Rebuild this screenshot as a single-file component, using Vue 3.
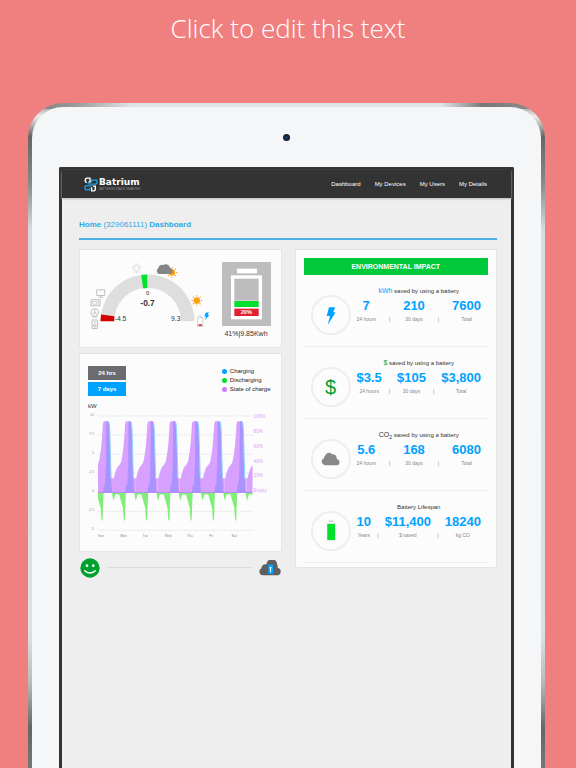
<!-- Battery dashboard shown inside a tablet frame -->
<template>
  <div class="page">
    <h1 class="headline">Click to edit this text</h1>

    <div class="tablet">
      <div class="bezel">
        <div class="camera"></div>
        <div class="screen">
          <!-- top bar -->
          <header class="navbar">
            <a class="brand" href="#">
              <svg class="brand-mark" viewBox="0 0 42 44" fill="none" stroke-width="4">
                <path d="M8 17 L4 13 V6 L8 3 H18 V15 H13" stroke="#fff" />
                <path d="M23 14 V9 H37 L39 12 V18 L35 21 H26" stroke="#1fa3e6" />
                <path d="M17 26 H5 L3 29 V35 L6 38 H17 V32" stroke="#1fa3e6" />
                <path d="M27 27 H34 V38 L31 41 H23 V30" stroke="#fff" />
                <path d="M13 15 V21 H21 M21 14 V30 M21 24 H28" stroke="#1fa3e6" stroke-width="3" />
              </svg>
              <span class="brand-text">
                <span class="brand-name">Batrium</span>
                <span class="brand-tag">BATTERIES MADE SMARTER</span>
              </span>
            </a>
            <nav class="nav-links">
              <a v-for="link in links" :key="link" href="#">{{ link }}</a>
            </nav>
          </header>

          <main class="content">
            <div class="breadcrumb"><b>Home</b> (329061111) <b>Dashboard</b></div>

            <div class="columns">
              <div class="left">
                <!-- power gauge and battery level -->
                <section class="card gauge-card">
                  <svg class="gauge" viewBox="36 45 384 225">
                    <path d="M77 231 A140 140 0 0 1 357 231 H317 A100 100 0 0 0 117 231 Z" fill="#dedede" />
                    <path d="M76 231 L78 211 L118 216 L117 231 Z" fill="#d40000" />
                    <path d="M198 93 L216 91 V132 L204 133 Z" fill="#00e02c" />
                    <g font-size="20" fill="#333">
                      <text x="217" y="152" text-anchor="middle" font-size="18">0</text>
                      <text x="217" y="186" text-anchor="middle" font-size="25" font-weight="bold">-0.7</text>
                      <text x="119" y="231">-4.5</text>
                      <text x="315" y="230" text-anchor="end">9.3</text>
                    </g>
                    <!-- bulb -->
                    <g fill="none" stroke="#c4c4c4" stroke-width="2">
                      <path d="M180 82 C180 77 176 76 176 71 A8 8 0 0 1 192 71 C192 76 188 77 188 82 Z M180 86 H188" />
                      <path d="M184 58 V61 M173 62 L175 64 M195 62 L193 64 M169 71 H173 M195 71 H199 M173 80 L175 78 M195 80 L193 78" />
                    </g>
                    <!-- sun behind cloud -->
                    <g stroke="#ff9f10" stroke-width="3">
                      <circle cx="290" cy="85" r="8" fill="#ff9f10" />
                      <path v-for="a in rays" :key="a" d="M290 73 V69" :transform="`rotate(${a} 290 85)`" />
                    </g>
                    <path d="M253 90 A8 9 0 0 1 249 73 A11 11 0 0 1 264 63 A13 13 0 0 1 284 71 A10 10 0 0 1 286 90 Z" fill="#858585" />
                    <!-- sun -->
                    <g stroke="#ff9f10" stroke-width="3">
                      <circle cx="364" cy="169" r="10" fill="#ff9f10" stroke="none" />
                      <path v-for="a in rays" :key="a" d="M364 157 V153" :transform="`rotate(${a} 364 169)`" />
                    </g>
                    <!-- appliances -->
                    <g fill="none" stroke="#c0c0c0" stroke-width="3">
                      <rect x="65" y="137" width="24" height="17" rx="2" />
                      <path d="M77 154 V158 M70 159 H84" />
                      <rect x="48" y="167" width="27" height="18" rx="1" />
                      <rect x="53" y="172" width="12" height="8" stroke-width="2" />
                      <path d="M70 170 V183" stroke-width="2" />
                      <circle cx="59" cy="205" r="11" />
                      <path d="M59 205 V197 M59 205 L53 210 M59 205 L66 210 M52 218 H66" />
                      <rect x="51" y="227" width="16" height="26" rx="2" />
                      <circle cx="59" cy="244" r="4" />
                      <circle cx="59" cy="233" r="1" />
                    </g>
                    <!-- low battery with bolt -->
                    <rect x="367" y="219" width="15" height="28" fill="#fff" stroke="#bbb" stroke-width="2" />
                    <path d="M371 215 H378" stroke="#bbb" stroke-width="2" />
                    <rect x="369" y="240" width="11" height="5" fill="#e0343f" />
                    <path d="M391 206 L400 204 L397 212 H402 L388 228 L392 217 H386 Z" fill="#00a2ff" />
                  </svg>

                  <div class="level">
                    <svg viewBox="0 0 147 192">
                      <rect width="147" height="192" fill="#bdbdbd" />
                      <rect x="45" y="20" width="60" height="14" fill="#fff" />
                      <rect x="27" y="40" width="93" height="132" fill="#fff" />
                      <rect x="37" y="50" width="73" height="66" fill="#bdbdbd" />
                      <rect x="37" y="117" width="73" height="18" fill="#00e02c" />
                      <rect x="37" y="140" width="73" height="22" fill="#e3202e" />
                      <text x="73" y="157" text-anchor="middle" font-size="17" font-weight="bold" fill="#fff">20%</text>
                    </svg>
                    <span>41%|9.85Kwh</span>
                  </div>
                </section>

                <!-- weekly chart -->
                <section class="card chart-card">
                  <div class="chart-top">
                    <div class="ranges">
                      <button
                        v-for="r in ranges"
                        :key="r"
                        type="button"
                        :class="{ active: r === range }"
                        @click="range = r"
                      >{{ r }}</button>
                    </div>
                    <ul class="legend">
                      <li class="charging">Charging</li>
                      <li class="discharging">Discharging</li>
                      <li class="soc">State of charge</li>
                    </ul>
                  </div>
                  <div class="unit">kW</div>
                  <svg class="chart" viewBox="36 180 564 399">
                    <defs>
                      <clipPath id="plot"><rect x="66" y="190" width="465" height="350" /></clipPath>
                    </defs>
                    <g stroke="#d4d4d4" stroke-width="2" stroke-dasharray="4 3">
                      <path v-for="t in ticks" :key="t.label" :d="`M66 ${t.y} H531`" />
                    </g>
                    <g clip-path="url(#plot)">
                      <g v-for="n in 8" :key="n" :transform="`translate(${(n - 1) * 67} 0)`">
                        <path :d="socPath" fill="#d8a0ff" />
                        <path :d="chargePath" fill="#a893ff" />
                        <path d="M97 214 C101 214 102 222 103 240 L107 385 L104 385 L100 240 Z" fill="#8fd4ff" />
                        <path :d="dischargePath" fill="#80ee78" />
                      </g>
                      <path d="M66 428 H531" stroke="#b48cf5" stroke-width="3" />
                    </g>
                    <g font-size="11" fill="#999" text-anchor="end">
                      <text v-for="t in ticks" :key="t.label" x="54" :y="t.y - 1">{{ t.label }}</text>
                    </g>
                    <g font-size="14" fill="#d6a3fa">
                      <text v-for="l in levels" :key="l.label" x="534" :y="l.y">{{ l.label }}</text>
                    </g>
                    <g font-size="10" fill="#888">
                      <text v-for="(d, i) in days" :key="d" :x="66 + i * 67" y="563">{{ d }}</text>
                    </g>
                  </svg>
                </section>

                <!-- status row -->
                <div class="status">
                  <svg class="smiley" viewBox="0 0 60 60">
                    <circle cx="30" cy="30" r="29" fill="#00a030" />
                    <circle cx="21" cy="23" r="4" fill="#fff" />
                    <circle cx="40" cy="23" r="4" fill="#fff" />
                    <path d="M14 38 Q30 52 46 38" fill="none" stroke="#fff" stroke-width="4" stroke-linecap="round" />
                  </svg>
                  <div class="track"></div>
                  <svg class="upload" viewBox="0 0 68 48">
                    <path d="M11 46 A11 11 0 0 1 7 25 A12 12 0 0 1 22 13 A16 16 0 0 1 54 14 Q57 18 55 23 A12 12 0 0 1 57 46 Z" fill="#5f5f5f" />
                    <rect x="27" y="14" width="15" height="28" fill="#00a2ff" />
                    <path d="M34 37 V22 M31 25 L34 21 L38 25" stroke="#fff" stroke-width="3" fill="none" />
                  </svg>
                </div>
              </div>

              <!-- savings -->
              <section class="card impact">
                <h2>ENVIRONMENTAL IMPACT</h2>
                <div v-for="row in impact" :key="row.icon" class="impact-row">
                  <div class="badge">
                    <svg v-if="row.icon === 'bolt'" viewBox="0 0 60 60" fill="#00a2ff">
                      <path d="M24 7 H43 L36 22 H44 L20 60 L27 33 H17 Z" />
                    </svg>
                    <span v-else-if="row.icon === 'dollar'" class="dollar">$</span>
                    <svg v-else-if="row.icon === 'cloud'" viewBox="0 0 60 60" fill="#888">
                      <path d="M12 49 A11 11 0 0 1 9 28 A8 8 0 0 1 12 21 A12 12 0 0 1 33 16 A11 11 0 0 1 47 26 Q48 28 47 30 A10 10 0 0 1 50 49 Z" />
                    </svg>
                    <svg v-else viewBox="0 0 60 60">
                      <rect x="23" y="-1" width="15" height="3" fill="#bbb" />
                      <rect x="17" y="6" width="27" height="53" fill="#e4e4e4" />
                      <rect x="19" y="9" width="23" height="48" fill="#00e02c" />
                    </svg>
                  </div>
                  <div class="figures">
                    <h3>
                      <span v-if="row.lead" :class="row.icon">{{ row.lead }}<sub v-if="row.sub">{{ row.sub }}</sub></span>
                      {{ row.title }}
                    </h3>
                    <div class="stats">
                      <template v-for="(s, i) in row.stats" :key="s.label">
                        <span v-if="i" class="bar">|</span>
                        <div class="stat">
                          <b>{{ s.value }}</b>
                          <span>{{ s.label }}</span>
                        </div>
                      </template>
                    </div>
                  </div>
                </div>
              </section>
            </div>
          </main>
        </div>
      </div>
    </div>
  </div>
</template>

<script setup>
import { ref } from 'vue'

const links = ['Dashboard', 'My Devices', 'My Users', 'My Details']
const ranges = ['24 hrs', '7 days']
const range = ref('7 days')
const rays = [0, 45, 90, 135, 180, 225, 270, 315]
const days = ['Sun', 'Mon', 'Tue', 'Wed', 'Thu', 'Fri', 'Sat']

// left axis, kW
const ticks = [
  { label: '10', y: 198 },
  { label: '7.5', y: 255 },
  { label: '5', y: 313 },
  { label: '2.5', y: 370 },
  { label: '0', y: 428 },
  { label: '-2.5', y: 485 },
  { label: '-5', y: 542 }
]

// right axis, state of charge
const levels = [
  { label: '100%', y: 204 },
  { label: '80%', y: 249 },
  { label: '60%', y: 293 },
  { label: '40%', y: 338 },
  { label: '20%', y: 383 },
  { label: 'Empty', y: 428 }
]

// one day of each series, repeated along the x axis
const socPath = 'M44 428 V385 H47 L50 372 L56 354 L62 347 L68 338 C75 312 78 270 80 232 C81 218 82 214 86 214 H94 C98 214 99 218 100 232 C102 290 103 340 104 385 H111 V428 Z'
const chargePath = 'M81 428 L83 407 L87 405 L90 340 L91 214 H94 C99 214 100 220 101 240 L105 385 L108 428 Z'
const dischargePath = 'M41 428 L44 448 L46 452 L49 442 L51 434 H63 L66 446 L71 464 L74 474 L76 505 L78 515 L80 510 L82 450 L83 428 Z'

const impact = [
  {
    icon: 'bolt',
    lead: 'kWh',
    title: 'saved by using a battery',
    stats: [
      { value: '7', label: '24 hours' },
      { value: '210', label: '30 days' },
      { value: '7600', label: 'Total' }
    ]
  },
  {
    icon: 'dollar',
    lead: '$',
    title: 'saved by using a battery',
    stats: [
      { value: '$3.5', label: '24 hours' },
      { value: '$105', label: '30 days' },
      { value: '$3,800', label: 'Total' }
    ]
  },
  {
    icon: 'cloud',
    lead: 'CO',
    sub: '2',
    title: 'saved by using a battery',
    stats: [
      { value: '5.6', label: '24 hours' },
      { value: '168', label: '30 days' },
      { value: '6080', label: 'Total' }
    ]
  },
  {
    icon: 'battery',
    title: 'Battery Lifespan',
    stats: [
      { value: '10', label: 'Years' },
      { value: '$11,400', label: '$ saved' },
      { value: '18240', label: 'kg CO' }
    ]
  }
]
</script>

<style>
body {
  background: #f08080;
}
</style>

<style scoped>
* {
  box-sizing: border-box;
}

.page {
  display: flex;
  flex-direction: column;
  height: 100vh;
  overflow: hidden;
  background: #f08080;
  font-family: "Liberation Sans", Arial, sans-serif;
  color: #333;
}

svg {
  display: block;
}

a {
  color: inherit;
  text-decoration: none;
}

.headline {
  margin: 0;
  padding: 8px 0 55px;
  font-family: "Open Sans", sans-serif;
  font-size: 26px;
  font-weight: 300;
  line-height: 40px;
  text-align: center;
  color: #fff;
}

/* tablet frame */
.tablet {
  flex: 1;
  display: flex;
  margin: 0 31px 0 28px;
  padding: 4px 4px 0;
  border-radius: 35px 35px 0 0;
  background:
    linear-gradient(90deg, #888 4%, #999 9%, #e2e3e5 20%, #e2e3e5 80%, #777 88%, #888 95%) top / 100% 6px no-repeat,
    linear-gradient(#888, #eee 2%, #666 5%, #888 12%, #d9dadd 19%, #dedfe1 80%, #bbb 87%, #666 94%, #777);
}

.bezel {
  flex: 1;
  display: flex;
  flex-direction: column;
  padding: 27px 27px 0;
  border-radius: 31px 31px 0 0;
  background: #f4f6f8;
}

.camera {
  align-self: center;
  width: 7px;
  height: 7px;
  margin-bottom: 26px;
  border-radius: 50%;
  background: radial-gradient(#1b3d7d, #14161d 70%);
}

.screen {
  flex: 1;
  border: 3px solid #333;
  border-bottom: 0;
  border-radius: 2px 2px 0 0;
  background: #eee;
}

/* top bar */
.navbar {
  display: flex;
  align-items: center;
  justify-content: space-between;
  height: 28px;
  padding: 0 24px 0 22px;
  background: #333;
  box-shadow: 0 1px 2px #bbb;
  color: #fff;
}

.brand {
  display: flex;
  align-items: center;
  gap: 1px;
}

.brand-mark {
  width: 14px;
  height: 15px;
}

.brand-text {
  display: flex;
  flex-direction: column;
}

.brand-name {
  font-family: "DejaVu Sans", sans-serif;
  font-size: 9px;
  font-weight: bold;
  line-height: 9px;
}

.brand-tag {
  font-size: 3px;
  line-height: 4px;
  color: #8a8a8a;
}

.nav-links {
  display: flex;
  gap: 14px;
  font-size: 6px;
}

/* page content */
.content {
  padding: 21px 14px 0 17px;
}

.breadcrumb {
  padding-bottom: 7px;
  border-bottom: 2px solid #4ab0e2;
  font-size: 8px;
  line-height: 12px;
  color: #2fa9e6;
}

.columns {
  display: grid;
  grid-template-columns: 1fr 1fr;
  align-items: start;
  gap: 13px;
  padding-top: 9px;
}

.left {
  min-width: 0;
}

.card {
  border: 1px solid #e6e6e6;
  background: #fcfcfc;
}

.gauge-card {
  display: flex;
  align-items: flex-start;
  justify-content: space-between;
  padding: 9px 10px 9px 7px;
}

.gauge {
  flex: 1;
  margin-right: 6px;
}

.level {
  display: flex;
  flex-direction: column;
  align-items: center;
  gap: 3px;
  width: 49px;
  padding-top: 3px;
  font-size: 7px;
  line-height: 9px;
}

.level svg {
  width: 100%;
}

/* chart */
.chart-card {
  margin-top: 5px;
  padding: 12px 5px 8px 8px;
}

.chart-top {
  display: flex;
  justify-content: space-between;
}

.ranges {
  display: flex;
  flex-direction: column;
  gap: 2px;
}

.ranges button {
  width: 38px;
  height: 14px;
  padding: 0;
  border: 0;
  background: #6b6c70;
  color: #fff;
  font-family: inherit;
  font-size: 6px;
  font-weight: bold;
  cursor: pointer;
}

.ranges button.active {
  background: #00a2ff;
}

.legend {
  margin: 0;
  padding: 1px 5px 0 0;
  list-style: none;
  font-size: 6px;
  line-height: 9px;
  color: #222;
}

.legend li {
  display: flex;
  align-items: center;
  gap: 3px;
}

.legend li::before {
  content: "";
  width: 5px;
  height: 5px;
  border-radius: 50%;
  background: #00a2ff;
}

.legend .discharging::before {
  background: #00e02c;
}

.legend .soc::before {
  background: #c97cff;
}

.unit {
  padding-top: 6px;
  font-size: 6px;
  line-height: 8px;
}

.chart {
  width: 100%;
}

/* status row */
.status {
  display: flex;
  align-items: center;
  gap: 7px;
  padding: 6px 0 0 1px;
}

.smiley {
  width: 20px;
  height: 20px;
}

.track {
  flex: 1;
  height: 1px;
  background: #dcdcdc;
}

.upload {
  width: 23px;
  height: 16px;
}

/* savings */
.impact {
  min-width: 0;
  padding: 8px 8px 4px;
}

.impact h2 {
  margin: 0;
  background: #00c93a;
  color: #fff;
  font-size: 7px;
  line-height: 17px;
  text-align: center;
}

.impact-row {
  display: flex;
  gap: 6px;
  height: 72px;
  padding: 10px 7px 0;
  border-bottom: 1px solid #eee;
}

.badge {
  display: flex;
  align-items: center;
  justify-content: center;
  flex-shrink: 0;
  width: 40px;
  height: 40px;
  margin-top: 10px;
  border: 2px solid #eee;
  border-radius: 50%;
}

.badge svg {
  width: 20px;
  height: 20px;
  overflow: visible;
}

.dollar {
  color: #00a030;
}

.badge .dollar {
  font-size: 20px;
}

.figures {
  flex: 1;
}

.impact h3 {
  margin: 0;
  font-size: 6px;
  font-weight: normal;
  line-height: 12px;
  text-align: center;
}

.impact h3 span {
  font-size: 7px;
}

.impact h3 .bolt {
  color: #00a2ff;
}

.impact h3 sub {
  font-size: 5px;
  line-height: 0;
}

.stats {
  display: flex;
  align-items: flex-end;
  justify-content: space-between;
}

.stat {
  display: flex;
  flex-direction: column;
  align-items: center;
}

.stat b {
  color: #00a2ff;
  font-size: 13px;
  line-height: 18px;
}

.stat span,
.bar {
  font-size: 5px;
  line-height: 8px;
  color: #888;
}
</style>
